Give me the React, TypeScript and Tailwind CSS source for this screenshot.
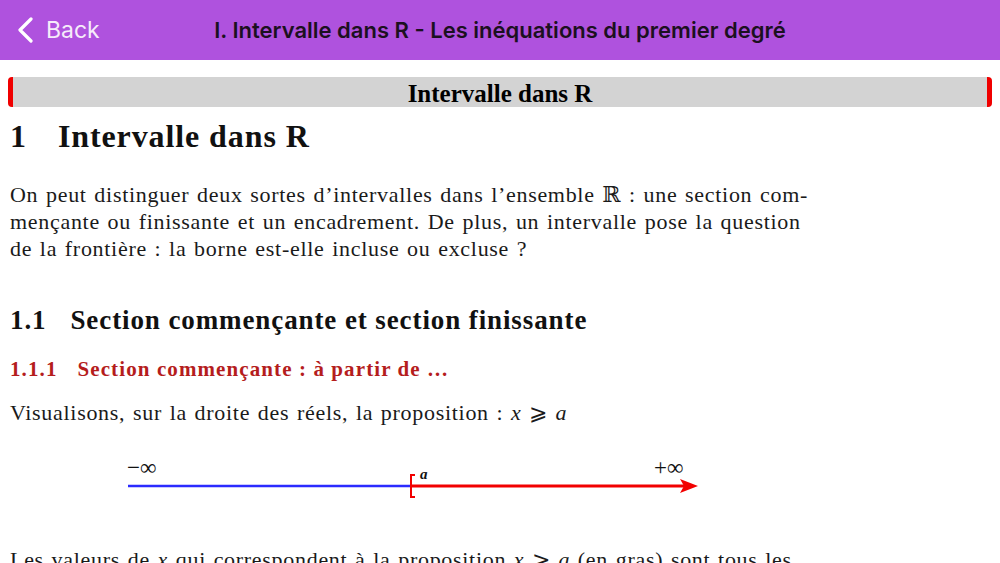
import React from "react";

export default function App() {
  return (
    <div className="w-[1000px] h-[563px] overflow-hidden bg-white flex flex-col font-['Liberation_Serif','DejaVu_Serif',serif]">
      <div className="h-[60px] bg-[#af52de] flex items-center relative shrink-0 font-['Inter','Noto_Sans',sans-serif]">
        <div className="flex items-center pl-[17px] gap-[11px]">
          <svg width="18" height="26" viewBox="0 0 18 26">
            <path d="M14 2 L3 13 L14 24" fill="none" stroke="#ffffff" strokeWidth="3.2" strokeLinecap="round" strokeLinejoin="round" />
          </svg>
          <span className="text-[23px] text-[#f6ecfa]">Back</span>
        </div>
        <div className="absolute inset-0 flex items-center justify-center pointer-events-none">
          <span className="text-[22px] font-semibold text-[#1c1020]">
            I. Intervalle dans R - Les inéquations du premier degré
          </span>
        </div>
      </div>

      <div className="shrink-0 mt-[17px] mx-[8px] h-[30px] bg-[#d3d3d3] border-l-[5px] border-r-[5px] border-[#f00000] rounded-[4px] flex items-center justify-center">
        <span className="text-[25px] font-bold text-black leading-none pt-[2px]">Intervalle dans R</span>
      </div>

      <div className="shrink-0 mt-[11px] pl-[10px] text-[32px] leading-[36px] font-bold text-[#111] tracking-[0.9px]">
        <span>1</span>
        <span className="ml-[31px]">Intervalle dans R</span>
      </div>

      <div className="shrink-0 mt-[27px] pl-[10px] text-[22px] leading-[27px] text-[#1a1a1a] tracking-[0.7px] [word-spacing:1.5px] whitespace-nowrap">
        <div>On peut distinguer deux sortes d’intervalles dans l’ensemble ℝ : une section com-</div>
        <div>mençante ou finissante et un encadrement. De plus, un intervalle pose la question</div>
        <div>de la frontière : la borne est-elle incluse ou excluse ?</div>
      </div>

      <div className="shrink-0 mt-[42px] pl-[10px] text-[27px] leading-[32px] font-bold text-[#111] tracking-[0.9px] whitespace-nowrap">
        <span>1.1</span>
        <span className="ml-[24px]">Section commençante et section finissante</span>
      </div>

      <div className="shrink-0 mt-[20px] pl-[10px] text-[21px] leading-[26px] font-bold text-[#b51d1d] tracking-[1.1px] whitespace-nowrap">
        <span>1.1.1</span>
        <span className="ml-[20px]">Section commençante : à partir de …</span>
      </div>

      <div className="shrink-0 mt-[17px] pl-[10px] text-[22px] leading-[27px] text-[#1a1a1a] tracking-[0.7px] [word-spacing:1.5px] whitespace-nowrap">
        Visualisons, sur la droite des réels, la proposition : <i>x</i> ⩾ <i>a</i>
      </div>

      <svg className="mt-[14px] shrink-0" width="1000" height="80" viewBox="0 440 1000 80">
        <line x1="128" y1="486" x2="410" y2="486" stroke="#2b2bff" strokeWidth="2.5" />
        <line x1="410" y1="486" x2="685" y2="486" stroke="#f20000" strokeWidth="3" />
        <polygon points="680,479 698,486 680,493 684,486" fill="#f20000" />
        <path d="M415 475 L411 475 L411 497 L415 497" fill="none" stroke="#f20000" strokeWidth="2" />
        <text x="127" y="475" fontSize="23" fill="#111" fontFamily="Liberation Serif, serif">−∞</text>
        <text x="654" y="475" fontSize="23" fill="#111" fontFamily="Liberation Serif, serif">+∞</text>
        <text x="420" y="479" fontSize="15" fontStyle="italic" fontWeight="bold" fill="#111" fontFamily="Liberation Serif, serif">a</text>
      </svg>

      <div className="shrink-0 mt-[26px] pl-[10px] text-[22px] leading-[27px] text-[#1a1a1a] tracking-[0.7px] [word-spacing:1.5px] whitespace-nowrap">
        Les valeurs de <i>x</i> qui correspondent à la proposition <i>x</i> ⩾ <i>a</i> (en gras) sont tous les
      </div>
    </div>
  );
}
